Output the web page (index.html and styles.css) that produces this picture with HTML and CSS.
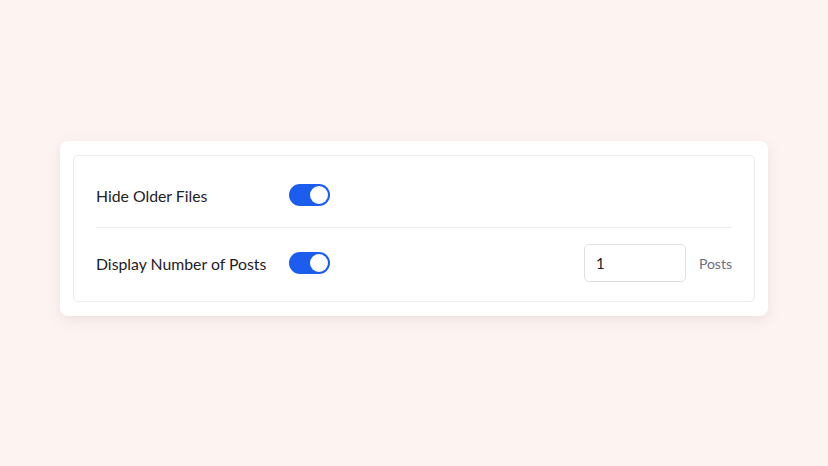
FILE: index.html
```html
<!DOCTYPE html>
<html lang="en">
<head>
  <meta charset="UTF-8">
  <meta name="viewport" content="width=device-width, initial-scale=1">
  <title>Post Settings</title>
  <link rel="stylesheet" href="styles.css">
</head>
<body>

  <div class="card">
    <div class="settings">
      <div class="row first">
        <span class="label">Hide Older Files</span>
        <label class="toggle">
          <input type="checkbox" checked>
          <span class="slider"></span>
        </label>
      </div>
      <div class="row second">
        <span class="label">Display Number of Posts</span>
        <label class="toggle">
          <input type="checkbox" checked>
          <span class="slider"></span>
        </label>
        <div class="count">
          <input class="num" type="text" value="1">
          <span class="unit">Posts</span>
        </div>
      </div>
    </div>
  </div>

</body>
</html>
```

FILE: styles.css
```css
body {
  margin: 0;
  height: 466px;
  background: #fdf4f2;
  display: flex;
  justify-content: center;
  align-items: flex-start;
  padding-top: 141px;
  box-sizing: border-box;
  font-family: 'Lato', 'Noto Sans', sans-serif;
}

.card {
  width: 708px;
  background: #fff;
  border-radius: 8px;
  padding: 14px 13px;
  box-sizing: border-box;
  box-shadow: 0 4px 14px rgba(120, 80, 70, 0.12);
}

.settings {
  border: 1px solid #ececec;
  border-radius: 5px;
  padding: 7px 22px 6px;
}

.row {
  display: flex;
  align-items: center;
}

.row.first {
  height: 64px;
  border-bottom: 1px solid #ececec;
}

.row.second {
  padding: 16px 0 13px;
}

.label {
  width: 193px;
  font-size: 15.8px;
  color: #1e2126;
}

.toggle {
  position: relative;
  display: inline-block;
  width: 41px;
  height: 22px;
}

.toggle input {
  display: none;
}

.slider {
  position: absolute;
  inset: 0;
  background: #1d5ded;
  border-radius: 11px;
  cursor: pointer;
}

.slider::after {
  content: '';
  position: absolute;
  top: 2px;
  right: 2px;
  width: 18px;
  height: 18px;
  border-radius: 50%;
  background: #fff;
}

.count {
  margin-left: auto;
  display: flex;
  align-items: center;
  gap: 13px;
}

.num {
  width: 102px;
  height: 38px;
  box-sizing: border-box;
  border: 1px solid #e0e0e0;
  border-radius: 5px;
  padding: 0 11px;
  font-family: inherit;
  font-size: 15px;
  color: #1e2126;
  outline: none;
}

.unit {
  font-size: 14px;
  color: #6b6e80;
}
```
